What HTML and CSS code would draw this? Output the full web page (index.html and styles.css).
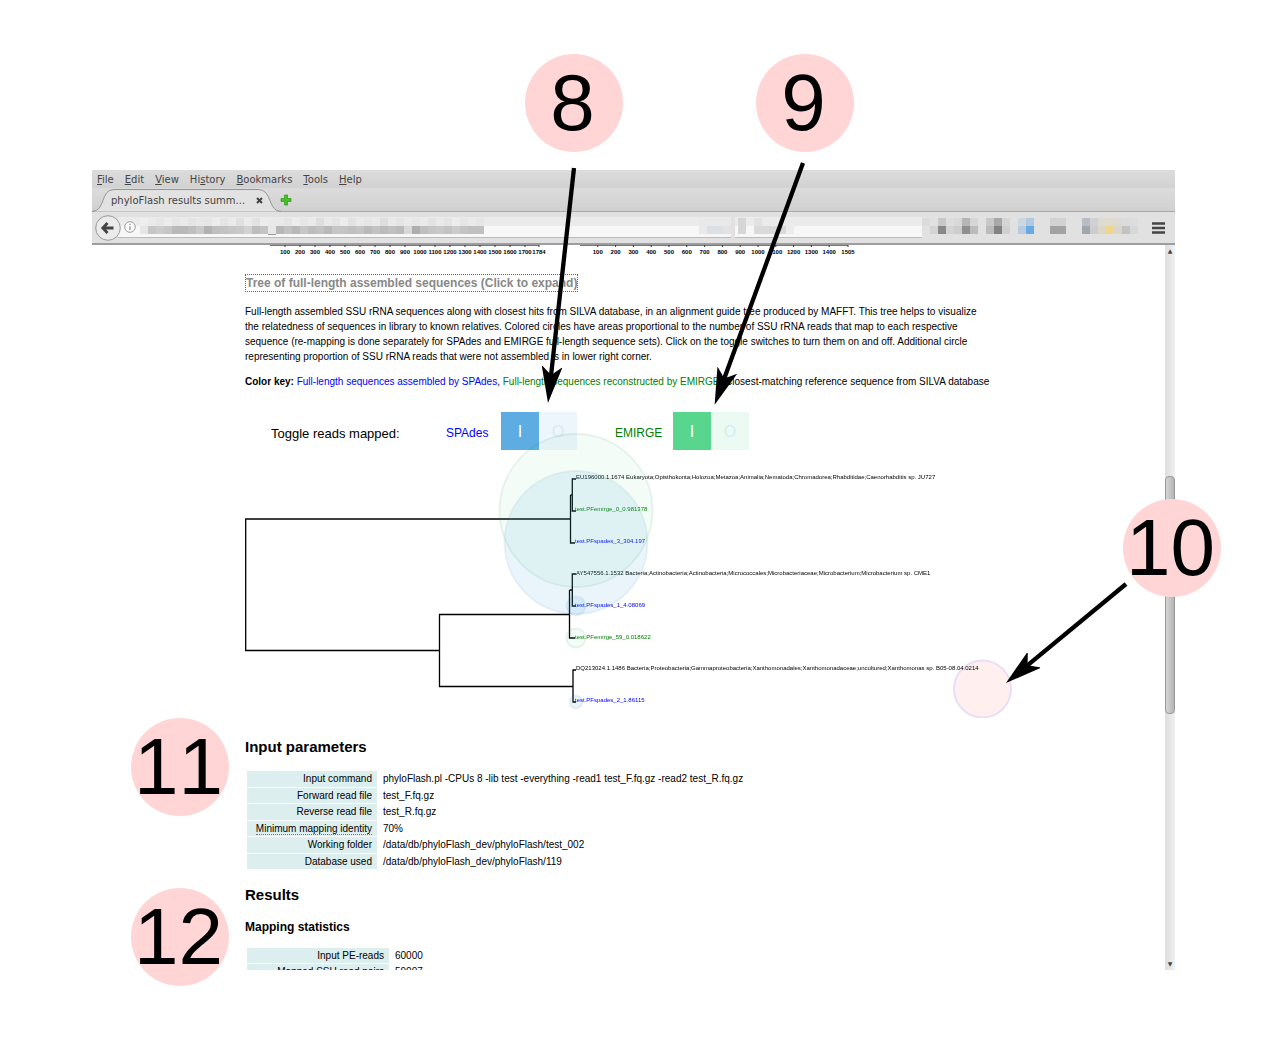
FILE: index.html
```
<!DOCTYPE html>
<html lang="en">
<head>
<meta charset="utf-8">
<title>phyloFlash results summary</title>
<link rel="stylesheet" href="styles.css">
</head>
<body>
<main class="figure">
  <section class="window">
    <nav class="menubar">
      <a href="#"><u>F</u>ile</a><a href="#"><u>E</u>dit</a><a href="#"><u>V</u>iew</a><a href="#">Hi<u>s</u>tory</a><a href="#"><u>B</u>ookmarks</a><a href="#"><u>T</u>ools</a><a href="#"><u>H</u>elp</a>
    </nav>
    <div class="tabs">
      <div class="tab">
        <svg class="tab-shape" viewBox="0 0 190 24" width="190" height="24" aria-hidden="true"><path d="M0 23.500C14 23 8 1.500 22 1.500H166C181 1.500 175 23 189 23.500" fill="#e2e2e2" stroke="#94959a"/></svg>
        <span class="tab-title">phyloFlash results summ...</span>
        <button class="tab-close" aria-label="Close tab"><svg width="7" height="7" viewBox="0 0 7 7"><path d="M1 1L6 6M6 1L1 6" stroke="#444" stroke-width="2"/></svg></button>
      </div>
      <button class="tab-new" aria-label="New tab"><svg width="12" height="12" viewBox="0 0 12 12"><path d="M4.500 1h3v3.500H11v3H7.500V11h-3V7.500H1v-3h3.500z" fill="#45bf26" stroke="#2f9a18" stroke-width=".7"/></svg></button>
    </div>
    <div class="toolbar">
      <button class="back" aria-label="Back"><svg width="26" height="26" viewBox="0 0 26 26"><circle cx="13" cy="13" r="12.300" fill="#ebebeb" stroke="#999"/><path d="M12.500 8L7.800 13L12.500 18M8 13H18.500" fill="none" stroke="#444" stroke-width="2.800"/></svg></button>
      <div class="address">
        <svg class="info" width="12" height="12" viewBox="0 0 12 12"><circle cx="6" cy="6" r="5.300" fill="#fafafa" stroke="#888" stroke-width=".8"/><path d="M6 5.200V9M6 2.800V4" stroke="#777"/></svg>
        <svg class="mosaic" width="344" height="21" viewBox="0 0 344 21" shape-rendering="crispEdges" id="mosaic-url"></svg>
        <svg class="mosaic site" width="32" height="21" viewBox="0 0 32 21" shape-rendering="crispEdges"><path d="M0 1h32v16H0z" fill="#e9e9e9"/><path d="M8 9h16v8H8z" fill="#dcdfe3"/><path d="M24 9h8v8h-8z" fill="#e3e3e3"/></svg>
      </div>
      <div class="search">
        <svg class="mosaic" width="60" height="21" viewBox="0 0 60 21" shape-rendering="crispEdges"><path d="M3 1h8v16H3z" fill="#d6d6d6"/><path d="M19 1h8v8h-8z" fill="#e2e2e2"/><path d="M19 9h32v8H19z" fill="#dadada"/><path d="M51 9h8v8h-8z" fill="#ececec"/></svg>
      </div>
      <svg class="tools" width="216" height="21" viewBox="0 0 216 21" shape-rendering="crispEdges" id="mosaic-tools"></svg>
      <button class="menu" aria-label="Open menu"><svg width="13" height="12" viewBox="0 0 13 12"><path d="M0 1.500h13M0 6h13M0 10.500h13" stroke="#444" stroke-width="2.400"/></svg></button>
    </div>
    <div class="viewport">
      <article class="page">
        <svg class="axes" id="axes" width="620" height="13" viewBox="0 0 620 13"></svg>
        <h3 class="expander"><a href="#tree">Tree of full-length assembled sequences (Click to expand)</a></h3>
        <p class="text">Full-length assembled SSU rRNA sequences along with closest hits from SILVA database, in an alignment guide tree produced by MAFFT. This tree helps to visualize<br>the relatedness of sequences in library to known relatives. Colored circles have areas proportional to the number of SSU rRNA reads that map to each respective<br>sequence (re-mapping is done separately for SPAdes and EMIRGE full-length sequence sets). Click on the toggle switches to turn them on and off. Additional circle<br>representing proportion of SSU rRNA reads that were not assembled is in lower right corner.</p>
        <p class="text key"><b>Color key:</b> <span class="spades">Full-length sequences assembled by SPAdes</span>, <span class="emirge">Full-length sequences reconstructed by EMIRGE</span>, Closest-matching reference sequence from SILVA database</p>
        <div class="toggles">
          <span class="toggle-lead">Toggle reads mapped:</span>
          <span class="spades" id="lab-s">SPAdes</span>
          <button class="switch blue" role="switch" aria-checked="true" aria-labelledby="lab-s"><span>I</span><span>O</span></button>
          <span class="emirge" id="lab-e">EMIRGE</span>
          <button class="switch green" role="switch" aria-checked="true" aria-labelledby="lab-e"><span>I</span><span>O</span></button>
        </div>
        <svg class="tree" id="tree" width="768" height="268" viewBox="0 0 768 268">
          <g fill="none" stroke="#000" stroke-width="1.300">
            <path d="M325 69H.7V200.500H194.500M325 164.500H194.500V236.500H328"/>
            <path d="M330 93H325.500V45M331 29H327.300V61H331M325.500 45H327.300"/>
            <path d="M330 188H324.500V140M331 124H327.300V156H331M324.500 140H327.300"/>
            <path d="M331 220H328V252H331"/>
          </g>
          <g class="labels">
            <text x="331" y="29">EU196000.1.1674 Eukaryota;Opisthokonta;Holozoa;Metazoa;Animalia;Nematoda;Chromadorea;Rhabditidae;Caenorhabditis sp. JU727</text>
            <text x="330" y="61" class="e">test.PFemirge_0_0.981378</text>
            <text x="330" y="93" class="s">test.PFspades_3_304.197</text>
            <text x="331" y="125">AY547556.1.1532 Bacteria;Actinobacteria;Actinobacteria;Micrococcales;Microbacteriaceae;Microbacterium;Microbacterium sp. CME1</text>
            <text x="330" y="157" class="s">test.PFspades_1_4.08069</text>
            <text x="330" y="189" class="e">test.PFemirge_59_0.018622</text>
            <text x="331" y="220">DQ213024.1.1486 Bacteria;Proteobacteria;Gammaproteobacteria;Xanthomonadales;Xanthomonadaceae;uncultured;Xanthomonas sp. B05-08.04.0214</text>
            <text x="330" y="252" class="s">test.PFspades_2_1.86115</text>
          </g>
          <g stroke-width="2">
            <g fill="#3498db" fill-opacity=".11" stroke="#1f618d" stroke-opacity=".07"><circle cx="331" cy="92.500" r="71.500"/><circle cx="331" cy="156" r="9.500"/><circle cx="331" cy="252" r="6.500"/></g>
            <g fill="#58d68d" fill-opacity=".07" stroke="#1d7a40" stroke-opacity=".09"><circle cx="331" cy="60.500" r="76.500"/><circle cx="331" cy="188" r="9.500"/></g>
            <circle class="unassembled" cx="737.500" cy="239" r="28.500"/>
          </g>
        </svg>
        <h2>Input parameters</h2>
        <table class="params">
          <tr><th>Input command</th><td>phyloFlash.pl -CPUs 8 -lib test -everything -read1 test_F.fq.gz -read2 test_R.fq.gz</td></tr>
          <tr><th>Forward read file</th><td>test_F.fq.gz</td></tr>
          <tr><th>Reverse read file</th><td>test_R.fq.gz</td></tr>
          <tr><th><span class="hint">Minimum mapping identity</span></th><td>70%</td></tr>
          <tr><th>Working folder</th><td>/data/db/phyloFlash_dev/phyloFlash/test_002</td></tr>
          <tr><th>Database used</th><td>/data/db/phyloFlash_dev/phyloFlash/119</td></tr>
        </table>
        <h2 class="results">Results</h2>
        <h3>Mapping statistics</h3>
        <table class="stats">
          <tr><th>Input PE-reads</th><td>60000</td></tr>
          <tr><th>Mapped SSU read pairs</th><td>59007</td></tr>
        </table>
      </article>
      <div class="scrollbar">
        <span class="arrow">▲</span><span class="before"></span><span class="thumb"></span><span class="after"></span><span class="arrow">▼</span>
      </div>
    </div>
  </section>

  <svg class="pointers" aria-hidden="true">
    <defs><marker id="head" viewBox="-36 -12 36 24" markerWidth="36" markerHeight="24" refX="-20" refY="0" orient="auto" markerUnits="userSpaceOnUse"><path d="M0 0L-37 -10.500L-28 0L-37 10.500Z"/></marker></defs>
    <g stroke="#000" stroke-width="4.300">
      <line x1="574" y1="168" x2="550.200" y2="383" marker-end="url(#head)"/>
      <line x1="803" y1="163" x2="721.500" y2="386" marker-end="url(#head)"/>
      <line x1="1126" y1="584" x2="1021.400" y2="670.300" marker-end="url(#head)"/>
    </g>
  </svg>
  <span class="badge b8">8</span>
  <span class="badge b9">9</span>
  <span class="badge b10">10</span>
  <span class="badge b11">11</span>
  <span class="badge b12">12</span>
</main>
<script src="page.js"></script>
</body>
</html>
```
FILE: styles.css
```
* { box-sizing: border-box; }
body { margin: 0; background: #fff; font-family: "Liberation Sans", Arial, sans-serif; color: #000; }
button { border: 0; padding: 0; background: none; font: inherit; display: flex; }
svg { display: block; flex: none; }
a { color: inherit; text-decoration: none; }

.figure { position: relative; height: 100vh; padding: 170px 105px 75px 92px; overflow: hidden; }
.window { display: flex; flex-direction: column; height: 100%; }

.menubar, .tabs, .toolbar { font-family: "DejaVu Sans", sans-serif; font-size: 10px; color: #444; flex: none; }
.menubar { display: flex; gap: 11px; height: 18px; padding-left: 5px; line-height: 20px; background: linear-gradient(#dcdcdc, #d2d2d2); }
.tabs { display: flex; align-items: flex-end; height: 24px; background: linear-gradient(#dcdcdc, #d0d0d0); border-bottom: 1px solid #a9a9a9; }
.tab { position: relative; display: flex; align-items: center; justify-content: space-between; width: 190px; height: 24px; padding: 0 19px 0 19px; margin-bottom: -1px; }
.tab-shape { position: absolute; left: 0; top: 0; }
.tab-title, .tab-close { position: relative; }
.tab-new { align-self: center; margin-left: -2px; }
.toolbar { display: flex; align-items: center; height: 33px; padding: 0 10px 0 3px; background: #e1e1e1; border-bottom: 2px solid #9d9da0; }
.back { z-index: 1; }
.address, .search { display: flex; align-items: center; height: 21px; background: linear-gradient(#ebebeb 45%, #f7f7f7 45%); border: solid #bbb; border-width: 0 0 1px; }
.address { flex: 1 1 616px; margin-left: -3px; padding-left: 6px; }
.info { margin-right: 4px; }
.site { margin-left: auto; }
.search { flex: 0 1 188px; margin-left: 4px; }
.tools { margin-right: 14px; }

.viewport { display: flex; flex: 1; min-height: 0; overflow: hidden; background: #fff; }
.page { flex: 1; min-width: 0; padding-left: 153px; overflow: hidden; }
.axes { font-size: 6px; font-weight: bold; }
.page h2 { margin: 19px 0 0; font-size: 15px; line-height: 20px; }
.page h3 { margin: 0; font-size: 12px; line-height: 16px; }
.page .expander { width: max-content; margin-top: 16px; color: #888; border: 1px dotted #666; }
.text { margin: 12px 0 0; font-size: 10px; line-height: 15px; white-space: nowrap; }
.key { margin-top: 10px; }
.spades { color: #00f; }
.emirge { color: #008000; }
.toggles { display: grid; grid-template-columns: 175px 55px 114px 58px 76px; align-items: center; margin-top: 23px; padding-left: 26px; font-size: 12px; }
.toggle-lead { font-size: 13px; }
.toggles > span { padding-top: 4px; }
.switch { width: 76px; height: 38px; line-height: 40px; font-size: 16px; text-align: center; }
.switch span { flex: 1; height: 38px; color: #fff; }
.blue span { background: #5dade2; }
.green span { background: #58d68d; }
.blue span + span { background: #edf5fd; color: #d9e9f6; }
.green span + span { background: #ebfaf2; color: #d3edf0; }
.tree { position: relative; overflow: visible; pointer-events: none; clip-path: inset(-20px 0 0 0); font-size: 6px; }
.labels .s { fill: #00f; }
.labels .e { fill: #008000; }
.unassembled { fill: #ffefef; stroke: #e8def8; mix-blend-mode: multiply; }
table { border-spacing: 2px 1px; margin-top: 13px; font-size: 10px; line-height: 15px; }
th, td { padding: 0 4px; font-weight: normal; text-align: left; white-space: nowrap; }
th { background: #dceeed; text-align: right; padding-right: 5px; }
.params { height: 100px; }
.params th { width: 130px; }
.stats th { width: 142px; }
.hint { border-bottom: 1px dotted #777; }
.page .results { margin-top: 15px; }
.results + h3 { margin-top: 14px; }
.stats { margin-top: 12px; }

.scrollbar { display: flex; flex-direction: column; width: 10px; flex: none; background: linear-gradient(90deg, #dedede, #f0f0f0); }
.arrow { height: 12px; font: 6px/12px "DejaVu Sans", sans-serif; text-align: center; color: #444; }
.before { flex: 220; }
.thumb { flex: 236; border: 1px solid #999; border-radius: 4px; background: linear-gradient(90deg, #d6d6d6, #b4b4b4); }
.after { flex: 245; }

.pointers { position: absolute; left: 0; top: 0; width: 100%; height: 100%; overflow: visible; pointer-events: none; }
.badge { position: absolute; width: 98px; height: 98px; padding-right: 3px; border-radius: 50%; background: #ffd5d5; font-size: 80px; font-kerning: none; line-height: 98px; display: flex; justify-content: center; }
.b8 { left: 525px; top: 54px; }
.b9 { left: 756px; top: 54px; }
.b10 { left: 1123px; top: 499px; }
.b11 { left: 131px; top: 718px; }
.b12 { left: 131px; top: 888px; }
```
FILE: page.js
```
const NS = "http://www.w3.org/2000/svg";
function add(parent, name, attrs, text) {
  const el = document.createElementNS(NS, name);
  for (const k in attrs) el.setAttribute(k, attrs[k]);
  if (text) el.textContent = text;
  parent.appendChild(el);
}

// Blurred-out address: two rows of 8px cells
const upper = "ee ea e6 ec e6 ea e4 e8 e6 ec e4 ea e0 ea e2 ec ea e9 e4 ec e6 ea de e9 e4 ec e2 e9 e6 e9 de e9 e4 e9 e6 ea e2 e9 e4 ec e6 ea e6".split(" ");
const lower = "e6 c6 cc c6 b9 b9 bf c9 b2 bf c2 c6 c9 d2 bd c4 e8 b8 c2 b9 c6 bd c2 b9 c6 c4 c0 c4 ba c2 bb c0 bb d8 ae bf c6 c9 c3 cb c4 c0 c0".split(" ");
const url = document.getElementById("mosaic-url");
upper.forEach((c, i) => add(url, "rect", { x: i * 8, y: 1, width: 8, height: 8, fill: "#" + c + c + c }));
lower.forEach((c, i) => add(url, "rect", { x: i * 8, y: 9, width: 8, height: 8, fill: "#" + c + c + c }));
add(url, "rect", { x: 128, y: 17, width: 8, height: 1, fill: "#999" });

// Blurred-out toolbar buttons: x, width, upper colour, lower colour
const cells = [
  [0, 8, "#dcdcdc", "#e1e1e1"], [8, 8, "#e1e1e1", "#d4d4d4"], [16, 8, "#c8c8c8", "#888"], [24, 8, "#ddd", "#d4d4d4"],
  [32, 8, "#d9d9d9", "#cdcdcd"], [40, 8, "#b6b6b6", "#8f8f8f"], [48, 8, "#d6d6d6", "#bcbcbc"],
  [64, 8, "#c8c8c8", "#bbb"], [72, 8, "#a8a8a8", "#828282"], [80, 8, "#d5d5d5", "#d0d0d0"],
  [96, 8, "#cdd7e0", "#b6cce0"], [104, 8, "#b2cae0", "#66aae6"],
  [128, 16, "#d2d2d2", "#a2a2a2"],
  [160, 8, "#b9bcc1", "#a0a6ab"], [168, 8, "#cfd1d4", "#cbcdd1"], [176, 8, "#dddbd2", "#dcd6c5"],
  [184, 8, "#dfdccd", "#f0d68c"], [192, 8, "#dcdad2", "#dad6ca"], [200, 8, "#dcdcdc", "#c2c2c2"], [208, 8, "#ddd", "#d8d8d8"]
];
const tools = document.getElementById("mosaic-tools");
for (const [x, w, a, b] of cells) {
  add(tools, "rect", { x, y: 1, width: w, height: 8, fill: a });
  add(tools, "rect", { x, y: 9, width: w, height: 8, fill: b });
}

// Histogram axes at the top of the page
const axes = document.getElementById("axes");
function axis(start, end, step, last) {
  add(axes, "path", { d: `M${start} .5H${end}`, stroke: "#777" });
  const mark = (x, t) => {
    add(axes, "path", { d: `M${x} 0v2`, stroke: "#333" });
    add(axes, "text", { x, y: 9, "text-anchor": "middle" }, t);
  };
  for (let v = 100; v + 80 < last; v += 100) mark(start + step * v / 100, String(v));
  mark(end, String(last));
}
axis(25, 294, 15, 1784);
axis(335, 603, 17.8, 1505);
```
